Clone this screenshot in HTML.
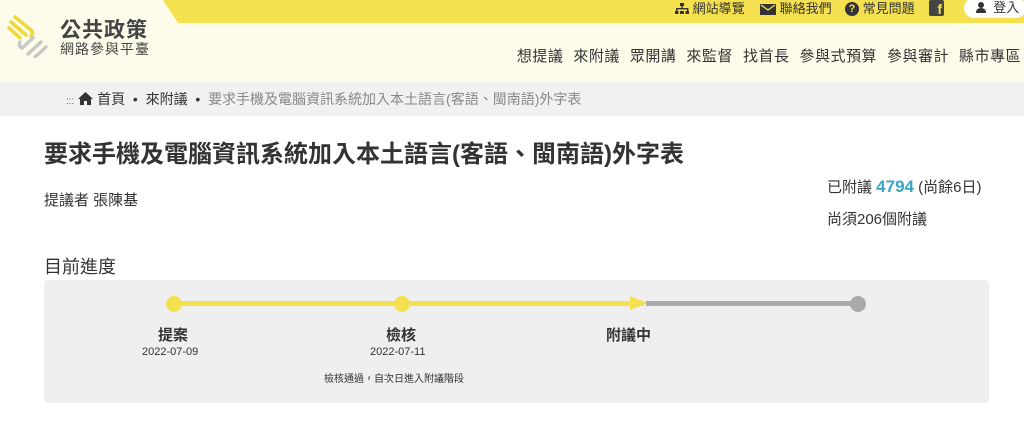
<!DOCTYPE html>
<html><head><meta charset="utf-8"><style>
*{margin:0;padding:0;box-sizing:border-box}
body{width:1024px;height:424px;overflow:hidden;background:#fff;font-family:"Liberation Sans","Noto Sans CJK TC",sans-serif;color:#333;position:relative}
.hdr{position:absolute;left:0;top:0;width:1024px;height:82px;background:#fdfcea}
.band{position:absolute;left:0;top:0;width:1024px;height:23px;background:#f5e150;clip-path:polygon(163px 0,1024px 0,1024px 23px,178px 23px)}
.top{position:absolute;top:0;height:18px;font-size:13px;color:#333;line-height:16px;display:flex;align-items:center}
.nav{position:absolute;top:45px;right:3px;font-size:15px;color:#333;display:flex;gap:10px;letter-spacing:.5px}
.bc{position:absolute;left:0;top:82px;width:1024px;height:34px;background:#f1f1f1;font-size:14px;line-height:34px;padding-left:66px}
.abs{position:absolute}
</style></head><body>
<div class="hdr"></div>
<div class="band"></div>
<svg class="abs" style="left:6px;top:14px" width="42" height="44" viewBox="0 0 42 44">
<g stroke="#f0d838" stroke-width="3.5" stroke-linecap="round" fill="none"><path d="M3 14 L14 24"/><path d="M5 8 L20 21"/><path d="M9 3 L25 16 Q28 19 25 22"/></g>
<g stroke="#c8c8c8" stroke-width="3.5" stroke-linecap="round" fill="none"><path d="M16 34 L27 24"/><path d="M22 40 L35 28"/><path d="M29 43 L40 33"/><path d="M14 28 Q12 32 16 34"/></g>
</svg>
<div class="abs" style="left:60px;top:14px;font-size:21px;font-weight:bold;color:#444;letter-spacing:1px">公共政策</div>
<div class="abs" style="left:60px;top:39px;font-size:14px;color:#444;letter-spacing:1px">網路參與平臺</div>
<div class="top" style="left:675px"><svg width="14" height="12" viewBox="0 0 14 12"><g fill="#333"><rect x="5" y="0" width="4" height="3"/><rect x="6.3" y="3" width="1.4" height="3"/><rect x="1" y="5" width="12" height="1.4"/><rect x="1" y="5" width="1.4" height="3"/><rect x="12" y="5" width="1.4" height="3"/><rect x="0" y="8" width="3.5" height="3"/><rect x="5" y="8" width="4" height="3"/><rect x="10.5" y="8" width="3.5" height="3"/></g></svg>&nbsp;網站導覽</div>
<div class="top" style="left:760px"><svg width="16" height="11"><rect width="16" height="11" fill="#333"/><path d="M1 1 L8 6 L15 1" stroke="#f5e150" stroke-width="1.3" fill="none"/></svg>&nbsp;聯絡我們</div>
<div class="top" style="left:845px"><span style="display:inline-block;width:14px;height:14px;border-radius:50%;background:#333;color:#f5e150;font-size:11px;font-weight:bold;text-align:center;line-height:14px">?</span>&nbsp;常見問題</div>
<div class="abs" style="left:929px;top:0;width:15px;height:16px;background:#444;border-radius:2px;color:#f5e150;font-weight:bold;font-size:14px;text-align:right;padding-right:2px;line-height:18px">f</div>
<div class="abs" style="left:964px;top:-2px;width:62px;height:20px;background:#fff;border-radius:10px;font-size:13px;line-height:20px;padding-left:12px"><svg width="10" height="11" style="vertical-align:-1px"><circle cx="5" cy="3" r="3" fill="#333"/><path d="M0 11 Q0 6 5 6 Q10 6 10 11Z" fill="#333"/></svg>&nbsp; 登入</div>
<div class="nav"><span>想提議</span><span>來附議</span><span>眾開講</span><span>來監督</span><span>找首長</span><span>參與式預算</span><span>參與審計</span><span>縣市專區</span></div>
<div class="bc"><span style="color:#555;font-size:10px">:::</span> <svg width="15" height="13" viewBox="0 0 15 13" style="vertical-align:-1px"><path d="M7.5 0 L15 7 L13 7 L13 13 L9 13 L9 9 L6 9 L6 13 L2 13 L2 7 L0 7Z" fill="#333"/></svg> <span style="color:#333">首頁</span> &nbsp;•&nbsp; <span style="color:#333">來附議</span> &nbsp;•&nbsp; <span style="color:#888">要求手機及電腦資訊系統加入本土語言(客語、閩南語)外字表</span></div>
<div class="abs" style="left:44px;top:134px;font-size:24px;font-weight:bold;color:#333">要求手機及電腦資訊系統加入本土語言(客語、閩南語)外字表</div>
<div class="abs" style="left:44px;top:189px;font-size:15px">提議者 張陳基</div>
<div class="abs" style="left:827px;top:176px;font-size:15px">已附議 <b style="color:#3aa6c4;font-size:17px">4794</b> (尚餘6日)</div>
<div class="abs" style="left:827px;top:208px;font-size:15px">尚須206個附議</div>
<div class="abs" style="left:44px;top:253px;font-size:18px">目前進度</div>
<div class="abs" style="left:44px;top:280px;width:945px;height:123px;background:#efefef;border-radius:4px"></div>
<div class="abs" style="left:174px;top:301px;width:470px;height:5px;background:#f5e150"></div>
<div class="abs" style="left:630px;top:296px;width:0;height:0;border-left:18px solid #f5e150;border-top:7px solid transparent;border-bottom:7px solid transparent"></div>
<div class="abs" style="left:646px;top:301px;width:212px;height:5px;background:#aaa"></div>
<div class="abs" style="left:166px;top:296px;width:16px;height:16px;border-radius:50%;background:#f5e150"></div>
<div class="abs" style="left:394px;top:296px;width:16px;height:16px;border-radius:50%;background:#f5e150"></div>
<div class="abs" style="left:850px;top:296px;width:16px;height:16px;border-radius:50%;background:#aaa"></div>
<div class="abs" style="left:158px;top:324px;font-size:15px;font-weight:bold">提案</div>
<div class="abs" style="left:142px;top:346px;font-size:11px">2022-07-09</div>
<div class="abs" style="left:386px;top:324px;font-size:15px;font-weight:bold">檢核</div>
<div class="abs" style="left:370px;top:346px;font-size:11px">2022-07-11</div>
<div class="abs" style="left:324px;top:370px;font-size:10px">檢核通過，自次日進入附議階段</div>
<div class="abs" style="left:606px;top:324px;font-size:15px;font-weight:bold">附議中</div>
</body></html>
